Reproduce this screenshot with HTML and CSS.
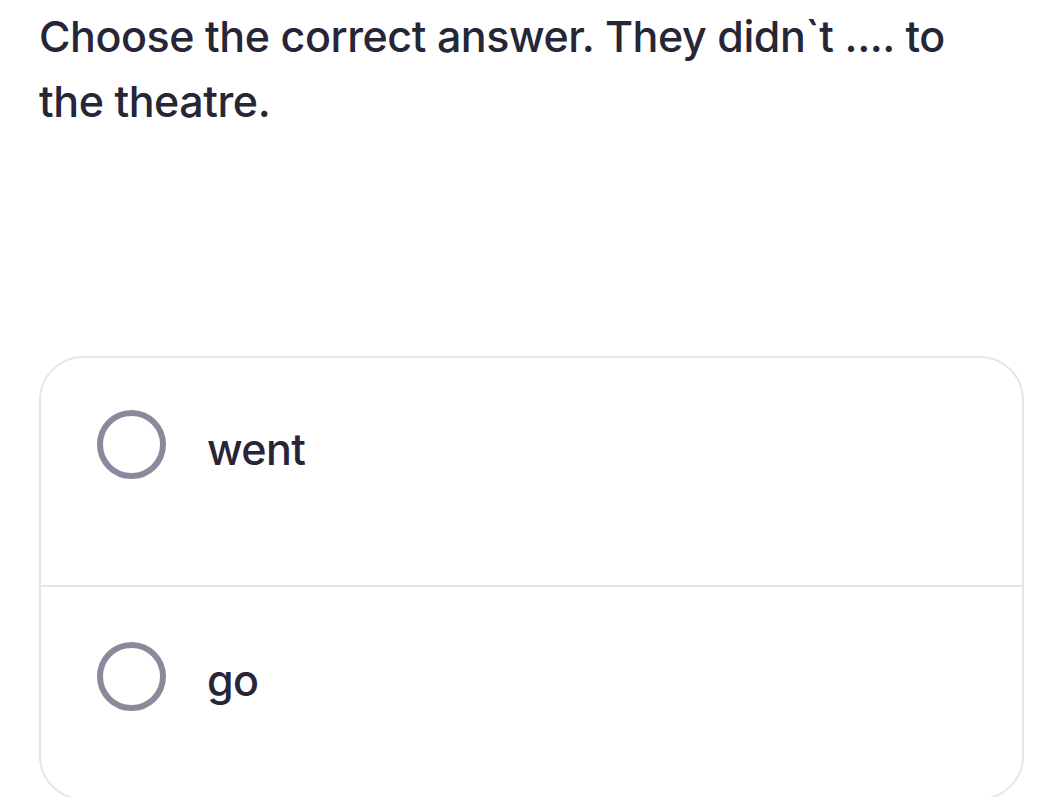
FILE: index.html
```html
<!DOCTYPE html>
<html>
<head>
<meta charset="utf-8">
<link rel="stylesheet" href="styles.css">
</head>
<body>
<div class="page">
  <h1 class="question">Choose the correct answer. They didn`t .... to the theatre.</h1>
  <div class="card">
    <label class="option">
      <span class="radio"></span>
      <span class="label">went</span>
    </label>
    <label class="option">
      <span class="radio"></span>
      <span class="label">go</span>
    </label>
  </div>
</div>
</body>
</html>
```
FILE: styles.css
```css
html, body {
  margin: 0;
  padding: 0;
  background: #ffffff;
}
body {
  font-family: Inter, "Noto Sans", sans-serif;
  color: #262637;
  overflow: hidden;
}
.page {
  padding: 4px 0 0 39px;
  width: 985px;
}
.question {
  margin: 0;
  font-size: 43px;
  font-weight: 500;
  line-height: 65px;
  width: 960px;
  letter-spacing: -0.45px;
}
.card {
  margin-top: 222px;
  border: 2px solid #e6e6ea;
  border-radius: 44px;
  height: 444px;
  box-sizing: border-box;
}
.option {
  display: flex;
  align-items: center;
  height: 227px;
  padding: 0 0 54px 56px;
  box-sizing: border-box;
  gap: 41px;
}
.option + .option {
  border-top: 2px solid #e4e4e8;
  height: 222px;
  padding-bottom: 42px;
}
.radio {
  width: 69px;
  height: 69px;
  border: 6px solid #8b8a9c;
  border-radius: 50%;
  box-sizing: border-box;
  flex: none;
}
.label {
  font-size: 43px;
  font-weight: 500;
  letter-spacing: -0.6px;
  padding-top: 8px;
}
```
